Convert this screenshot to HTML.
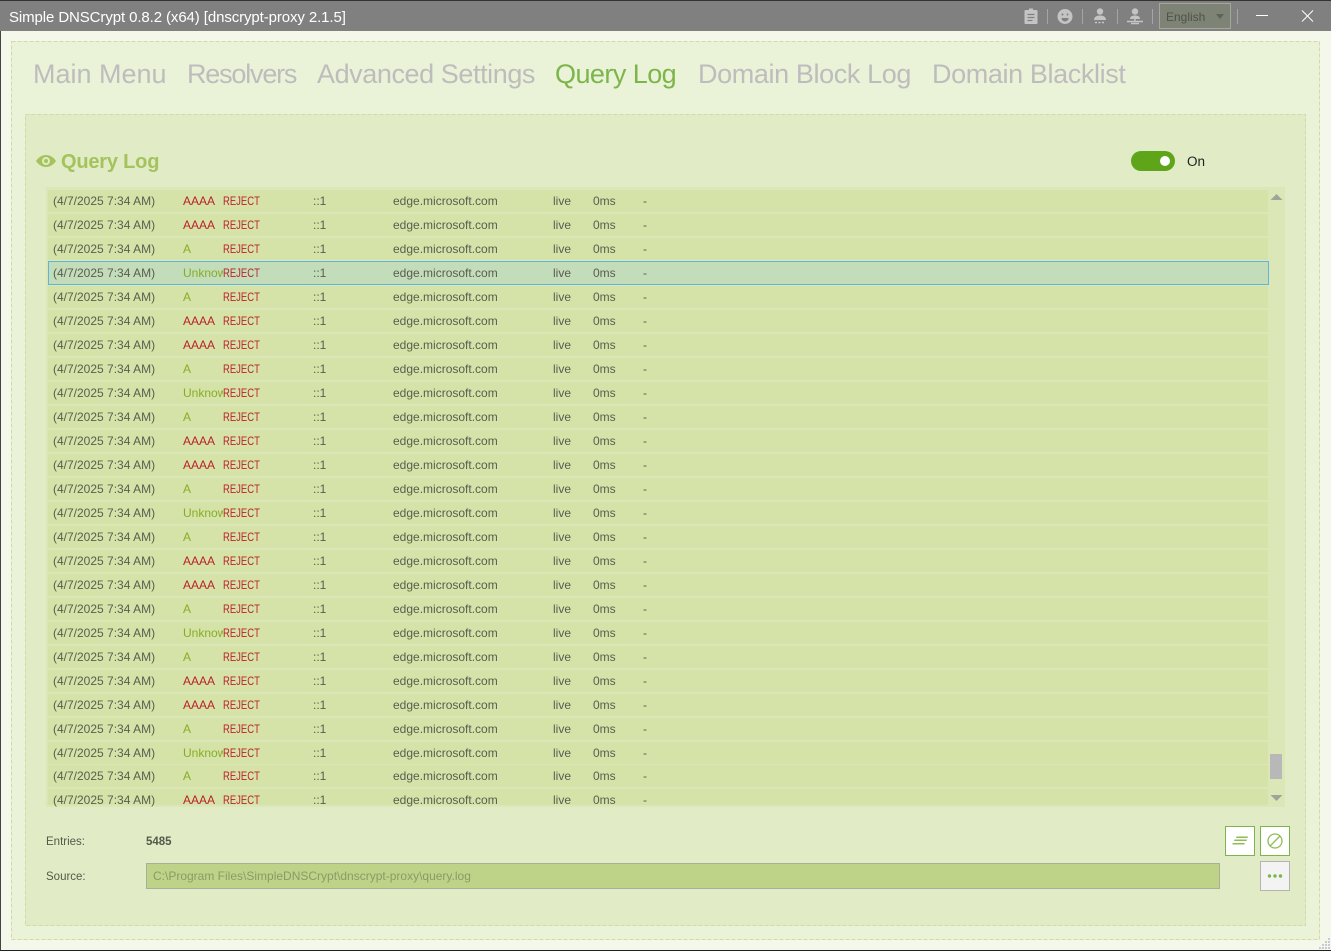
<!DOCTYPE html>
<html><head><meta charset="utf-8"><title>Simple DNSCrypt</title>
<style>
html,body{margin:0;padding:0;width:1331px;height:951px;overflow:hidden;background:#f4f8ea;font-family:"Liberation Sans",sans-serif}
div,span,svg{position:absolute;white-space:nowrap}
#tb{left:0;top:0;width:1331px;height:31px;background:#808080;border-top:1px solid #333;box-sizing:border-box}
#ttl{left:9px;top:8px;font-size:15px;line-height:18px;color:#fff;letter-spacing:-.1px}
#o{left:11px;top:41px;width:1309px;height:899px;background:#eaf2d8}
#i{left:25px;top:114px;width:1281px;height:812px;background:#e1ebc5}
.n{top:58px;font-size:27px;line-height:32px;color:#bdbdbd}
#l{left:46px;top:187px;width:1239px;height:620px;background:#dbe7b7;overflow:hidden}
.r{left:2px;width:1220px;height:22px;background:#d5e3a8;font-size:12px;line-height:22px;color:#5a5d50}
.r span{top:0;overflow:hidden}
.d{left:5px}.t{left:135px;width:40px}.s{left:175px;color:#bb1f2a;transform:scaleX(.79);transform-origin:0 0}.c{left:265px}.h{left:345px}.v{left:505px}.m{left:545px}.x{left:595px}
.a{color:#bb1f2a}.g{color:#86ad26}
.sel{background:#c3dcba;box-shadow:inset 0 0 0 1px #5db5d8}
.lb{font-size:11.5px;line-height:16px;color:#55594a}
.sp{top:9px;width:1px;height:15px;background:#a5a5a5}
</style></head><body>
<div id="tb">
<div id="ttl">Simple DNSCrypt 0.8.2 (x64) [dnscrypt-proxy 2.1.5]</div>
</div>
<svg style="left:1020px;top:7px" width="90" height="20" viewBox="0 0 90 20">
<g transform="translate(3 0)">
<path fill="#c4c4c4" d="M2.500 3H6V1.500h4V3h3.500a1 1 0 0 1 1 1v12a1 1 0 0 1-1 1h-11a1 1 0 0 1-1-1V4a1 1 0 0 1 1-1z"/>
<path stroke="#808080" stroke-width="1.200" d="M4.500 7.500h7M4.500 10.500h7M4.500 13.500h5"/>
</g>
<circle cx="45" cy="9.500" r="7.500" fill="#c4c4c4"/><circle cx="42.500" cy="7.500" r="1" fill="#808080"/><circle cx="47.500" cy="7.500" r="1" fill="#808080"/>
<path d="M41.500 11h7a3.500 3.500 0 0 1-7 0z" fill="#808080"/>
<circle cx="80" cy="4.500" r="3.200" fill="#c4c4c4"/><path fill="#c4c4c4" d="M74 13c0-3 2.500-4.500 6-4.500s6 1.500 6 4.500z"/>
<path stroke="#c4c4c4" stroke-width="1.500" stroke-dasharray="2 1.500" d="M75 15.500h10"/>
</svg>
<svg style="left:1125px;top:7px" width="20" height="20" viewBox="0 0 20 20">
<circle cx="10" cy="4.500" r="3.200" fill="#c4c4c4"/><path fill="#c4c4c4" d="M5 12c0-2.500 2-3.500 5-3.500s5 1 5 3.500z"/><path stroke="#c4c4c4" stroke-width="1.500" d="M2 14.500h16M10 12v2M6 16.500h8"/>
</svg>
<div class="sp" style="left:1047px"></div><div class="sp" style="left:1082px"></div><div class="sp" style="left:1117px"></div><div class="sp" style="left:1152px"></div><div class="sp" style="left:1237px"></div>
<div style="left:1159px;top:3px;width:72px;height:26px;box-sizing:border-box;border:1px solid #a3a89a;background:#7d8375;font-size:12px;line-height:27px;color:#4f5348;text-indent:6px">English</div>
<svg style="left:1215px;top:14px" width="10" height="6"><path d="M1 0h8L5 5z" fill="#5e6357"/></svg>
<svg style="left:1250px;top:10px" width="70" height="12" viewBox="0 0 70 12"><path stroke="#fff" stroke-width="1" d="M6 5.500h12M52 .5l11 11M63 .5l-11 11"/></svg>

<div id="o"></div>
<div class="n" style="left:33px">Main Menu</div>
<div class="n" style="left:187px;letter-spacing:-1.200px">Resolvers</div>
<div class="n" style="left:317px;letter-spacing:-.420px">Advanced Settings</div>
<div class="n" style="left:555px;color:#7db54a;letter-spacing:-.550px">Query Log</div>
<div class="n" style="left:698px;letter-spacing:-.380px">Domain Block Log</div>
<div class="n" style="left:932px;letter-spacing:-.380px">Domain Blacklist</div>
<div id="i"></div>
<svg style="left:0;top:0" width="1331" height="951"><g fill="none" stroke="#cfdca5" stroke-dasharray="4 2"><rect x="11.500" y="41.500" width="1308" height="898"/><rect x="25.500" y="114.500" width="1280" height="811"/></g></svg>
<svg style="left:36px;top:153px" width="20" height="16" viewBox="0 0 20 16"><path fill="#a4c35c" d="M10 2C5.500 2 2 5 0 8c2 3 5.500 6 10 6s8-3 10-6c-2-3-5.500-6-10-6zm0 10a4 4 0 1 1 0-8 4 4 0 0 1 0 8z"/><circle cx="10" cy="8" r="2" fill="#a4c35c"/></svg>
<div style="left:61px;top:150px;font-size:20px;line-height:24px;font-weight:bold;color:#a4c35c;letter-spacing:-.2px">Query Log</div>
<div style="left:1131px;top:151px;width:44px;height:20px;border-radius:10px;background:#5fa51a"></div>
<div style="left:1160px;top:156px;width:10px;height:10px;border-radius:50%;background:#fff"></div>
<div style="left:1187px;top:154px;font-size:13.500px;line-height:16px;color:#222">On</div>

<div id="l">
<div class="r" style="top:3px"><span class="d">(4/7/2025 7:34 AM)</span><span class="t a">AAAA</span><span class="s">REJECT</span><span class="c">::1</span><span class="h">edge.microsoft.com</span><span class="v">live</span><span class="m">0ms</span><span class="x">-</span></div>
<div class="r" style="top:27px"><span class="d">(4/7/2025 7:34 AM)</span><span class="t a">AAAA</span><span class="s">REJECT</span><span class="c">::1</span><span class="h">edge.microsoft.com</span><span class="v">live</span><span class="m">0ms</span><span class="x">-</span></div>
<div class="r" style="top:51px"><span class="d">(4/7/2025 7:34 AM)</span><span class="t g">A</span><span class="s">REJECT</span><span class="c">::1</span><span class="h">edge.microsoft.com</span><span class="v">live</span><span class="m">0ms</span><span class="x">-</span></div>
<div class="r sel" style="top:74px;height:24px;line-height:24px;width:1221px"><span class="d">(4/7/2025 7:34 AM)</span><span class="t g">Unknown</span><span class="s">REJECT</span><span class="c">::1</span><span class="h">edge.microsoft.com</span><span class="v">live</span><span class="m">0ms</span><span class="x">-</span></div>
<div class="r" style="top:99px"><span class="d">(4/7/2025 7:34 AM)</span><span class="t g">A</span><span class="s">REJECT</span><span class="c">::1</span><span class="h">edge.microsoft.com</span><span class="v">live</span><span class="m">0ms</span><span class="x">-</span></div>
<div class="r" style="top:123px"><span class="d">(4/7/2025 7:34 AM)</span><span class="t a">AAAA</span><span class="s">REJECT</span><span class="c">::1</span><span class="h">edge.microsoft.com</span><span class="v">live</span><span class="m">0ms</span><span class="x">-</span></div>
<div class="r" style="top:147px"><span class="d">(4/7/2025 7:34 AM)</span><span class="t a">AAAA</span><span class="s">REJECT</span><span class="c">::1</span><span class="h">edge.microsoft.com</span><span class="v">live</span><span class="m">0ms</span><span class="x">-</span></div>
<div class="r" style="top:171px"><span class="d">(4/7/2025 7:34 AM)</span><span class="t g">A</span><span class="s">REJECT</span><span class="c">::1</span><span class="h">edge.microsoft.com</span><span class="v">live</span><span class="m">0ms</span><span class="x">-</span></div>
<div class="r" style="top:195px"><span class="d">(4/7/2025 7:34 AM)</span><span class="t g">Unknown</span><span class="s">REJECT</span><span class="c">::1</span><span class="h">edge.microsoft.com</span><span class="v">live</span><span class="m">0ms</span><span class="x">-</span></div>
<div class="r" style="top:219px"><span class="d">(4/7/2025 7:34 AM)</span><span class="t g">A</span><span class="s">REJECT</span><span class="c">::1</span><span class="h">edge.microsoft.com</span><span class="v">live</span><span class="m">0ms</span><span class="x">-</span></div>
<div class="r" style="top:243px"><span class="d">(4/7/2025 7:34 AM)</span><span class="t a">AAAA</span><span class="s">REJECT</span><span class="c">::1</span><span class="h">edge.microsoft.com</span><span class="v">live</span><span class="m">0ms</span><span class="x">-</span></div>
<div class="r" style="top:267px"><span class="d">(4/7/2025 7:34 AM)</span><span class="t a">AAAA</span><span class="s">REJECT</span><span class="c">::1</span><span class="h">edge.microsoft.com</span><span class="v">live</span><span class="m">0ms</span><span class="x">-</span></div>
<div class="r" style="top:291px"><span class="d">(4/7/2025 7:34 AM)</span><span class="t g">A</span><span class="s">REJECT</span><span class="c">::1</span><span class="h">edge.microsoft.com</span><span class="v">live</span><span class="m">0ms</span><span class="x">-</span></div>
<div class="r" style="top:315px"><span class="d">(4/7/2025 7:34 AM)</span><span class="t g">Unknown</span><span class="s">REJECT</span><span class="c">::1</span><span class="h">edge.microsoft.com</span><span class="v">live</span><span class="m">0ms</span><span class="x">-</span></div>
<div class="r" style="top:339px"><span class="d">(4/7/2025 7:34 AM)</span><span class="t g">A</span><span class="s">REJECT</span><span class="c">::1</span><span class="h">edge.microsoft.com</span><span class="v">live</span><span class="m">0ms</span><span class="x">-</span></div>
<div class="r" style="top:363px"><span class="d">(4/7/2025 7:34 AM)</span><span class="t a">AAAA</span><span class="s">REJECT</span><span class="c">::1</span><span class="h">edge.microsoft.com</span><span class="v">live</span><span class="m">0ms</span><span class="x">-</span></div>
<div class="r" style="top:387px"><span class="d">(4/7/2025 7:34 AM)</span><span class="t a">AAAA</span><span class="s">REJECT</span><span class="c">::1</span><span class="h">edge.microsoft.com</span><span class="v">live</span><span class="m">0ms</span><span class="x">-</span></div>
<div class="r" style="top:411px"><span class="d">(4/7/2025 7:34 AM)</span><span class="t g">A</span><span class="s">REJECT</span><span class="c">::1</span><span class="h">edge.microsoft.com</span><span class="v">live</span><span class="m">0ms</span><span class="x">-</span></div>
<div class="r" style="top:435px"><span class="d">(4/7/2025 7:34 AM)</span><span class="t g">Unknown</span><span class="s">REJECT</span><span class="c">::1</span><span class="h">edge.microsoft.com</span><span class="v">live</span><span class="m">0ms</span><span class="x">-</span></div>
<div class="r" style="top:459px"><span class="d">(4/7/2025 7:34 AM)</span><span class="t g">A</span><span class="s">REJECT</span><span class="c">::1</span><span class="h">edge.microsoft.com</span><span class="v">live</span><span class="m">0ms</span><span class="x">-</span></div>
<div class="r" style="top:483px"><span class="d">(4/7/2025 7:34 AM)</span><span class="t a">AAAA</span><span class="s">REJECT</span><span class="c">::1</span><span class="h">edge.microsoft.com</span><span class="v">live</span><span class="m">0ms</span><span class="x">-</span></div>
<div class="r" style="top:507px"><span class="d">(4/7/2025 7:34 AM)</span><span class="t a">AAAA</span><span class="s">REJECT</span><span class="c">::1</span><span class="h">edge.microsoft.com</span><span class="v">live</span><span class="m">0ms</span><span class="x">-</span></div>
<div class="r" style="top:531px"><span class="d">(4/7/2025 7:34 AM)</span><span class="t g">A</span><span class="s">REJECT</span><span class="c">::1</span><span class="h">edge.microsoft.com</span><span class="v">live</span><span class="m">0ms</span><span class="x">-</span></div>
<div class="r" style="top:555px"><span class="d">(4/7/2025 7:34 AM)</span><span class="t g">Unknown</span><span class="s">REJECT</span><span class="c">::1</span><span class="h">edge.microsoft.com</span><span class="v">live</span><span class="m">0ms</span><span class="x">-</span></div>
<div class="r" style="top:578px"><span class="d">(4/7/2025 7:34 AM)</span><span class="t g">A</span><span class="s">REJECT</span><span class="c">::1</span><span class="h">edge.microsoft.com</span><span class="v">live</span><span class="m">0ms</span><span class="x">-</span></div>
<div class="r" style="top:602px;height:16px"><span class="d">(4/7/2025 7:34 AM)</span><span class="t a">AAAA</span><span class="s">REJECT</span><span class="c">::1</span><span class="h">edge.microsoft.com</span><span class="v">live</span><span class="m">0ms</span><span class="x">-</span></div>
</div>
<svg style="left:1270px;top:193px" width="13" height="8"><path d="M6.500 1L12.500 7H.5z" fill="#a0a59a"/></svg>
<div style="left:1270px;top:754px;width:12px;height:25px;background:#b8b8b8"></div>
<svg style="left:1270px;top:794px" width="13" height="8"><path d="M.5 1h12L6.500 7z" fill="#a0a59a"/></svg>

<div class="lb" style="left:46px;top:834px">Entries:</div>
<div class="lb" style="left:146px;top:834px;font-weight:bold">5485</div>
<div class="lb" style="left:46px;top:869px">Source:</div>
<div style="left:146px;top:863px;width:1074px;height:26px;box-sizing:border-box;border:1px solid #a8b09a;background:#bfd388;font-size:12px;line-height:25px;color:#8b9a68;text-indent:6px">C:\Program Files\SimpleDNSCrypt\dnscrypt-proxy\query.log</div>

<div style="left:1225px;top:826px;width:30px;height:30px;box-sizing:border-box;border:1px solid #7db54a;background:#fff"></div>
<svg style="left:1225px;top:826px" width="30" height="30"><path fill="#8fbc55" d="M11.500 10.500h11.500l-.5 1.500H11zM9.500 13.500h12.500l-.5 1.500H9zM7.800 17h12l-.5 1.500H7.300z"/></svg>
<div style="left:1260px;top:826px;width:30px;height:30px;box-sizing:border-box;border:1px solid #7db54a;background:#fff"></div>
<svg style="left:1260px;top:826px" width="30" height="30"><circle cx="15" cy="15" r="7" fill="none" stroke="#8fbc55" stroke-width="1.300"/><path stroke="#8fbc55" stroke-width="1.300" d="M10 20L20 10"/></svg>
<div style="left:1260px;top:861px;width:30px;height:30px;box-sizing:border-box;border:1px solid #b3b3b3;background:#f3f3f3"></div>
<svg style="left:1260px;top:861px" width="30" height="30"><circle cx="9.500" cy="15" r="1.700" fill="#7db54a"/><circle cx="15" cy="15" r="1.700" fill="#7db54a"/><circle cx="20.500" cy="15" r="1.700" fill="#7db54a"/></svg>

<svg style="left:1318px;top:937px" width="13" height="13"><path stroke="#c3cbd8" stroke-width="2" stroke-dasharray="2 1" d="M11 1v12M8 4v9M5 7v6M2 10v3"/></svg>
<div style="left:0;top:31px;width:1px;height:920px;background:#444"></div>
<div style="left:0;top:950px;width:1331px;height:1px;background:#222"></div>
</body></html>
